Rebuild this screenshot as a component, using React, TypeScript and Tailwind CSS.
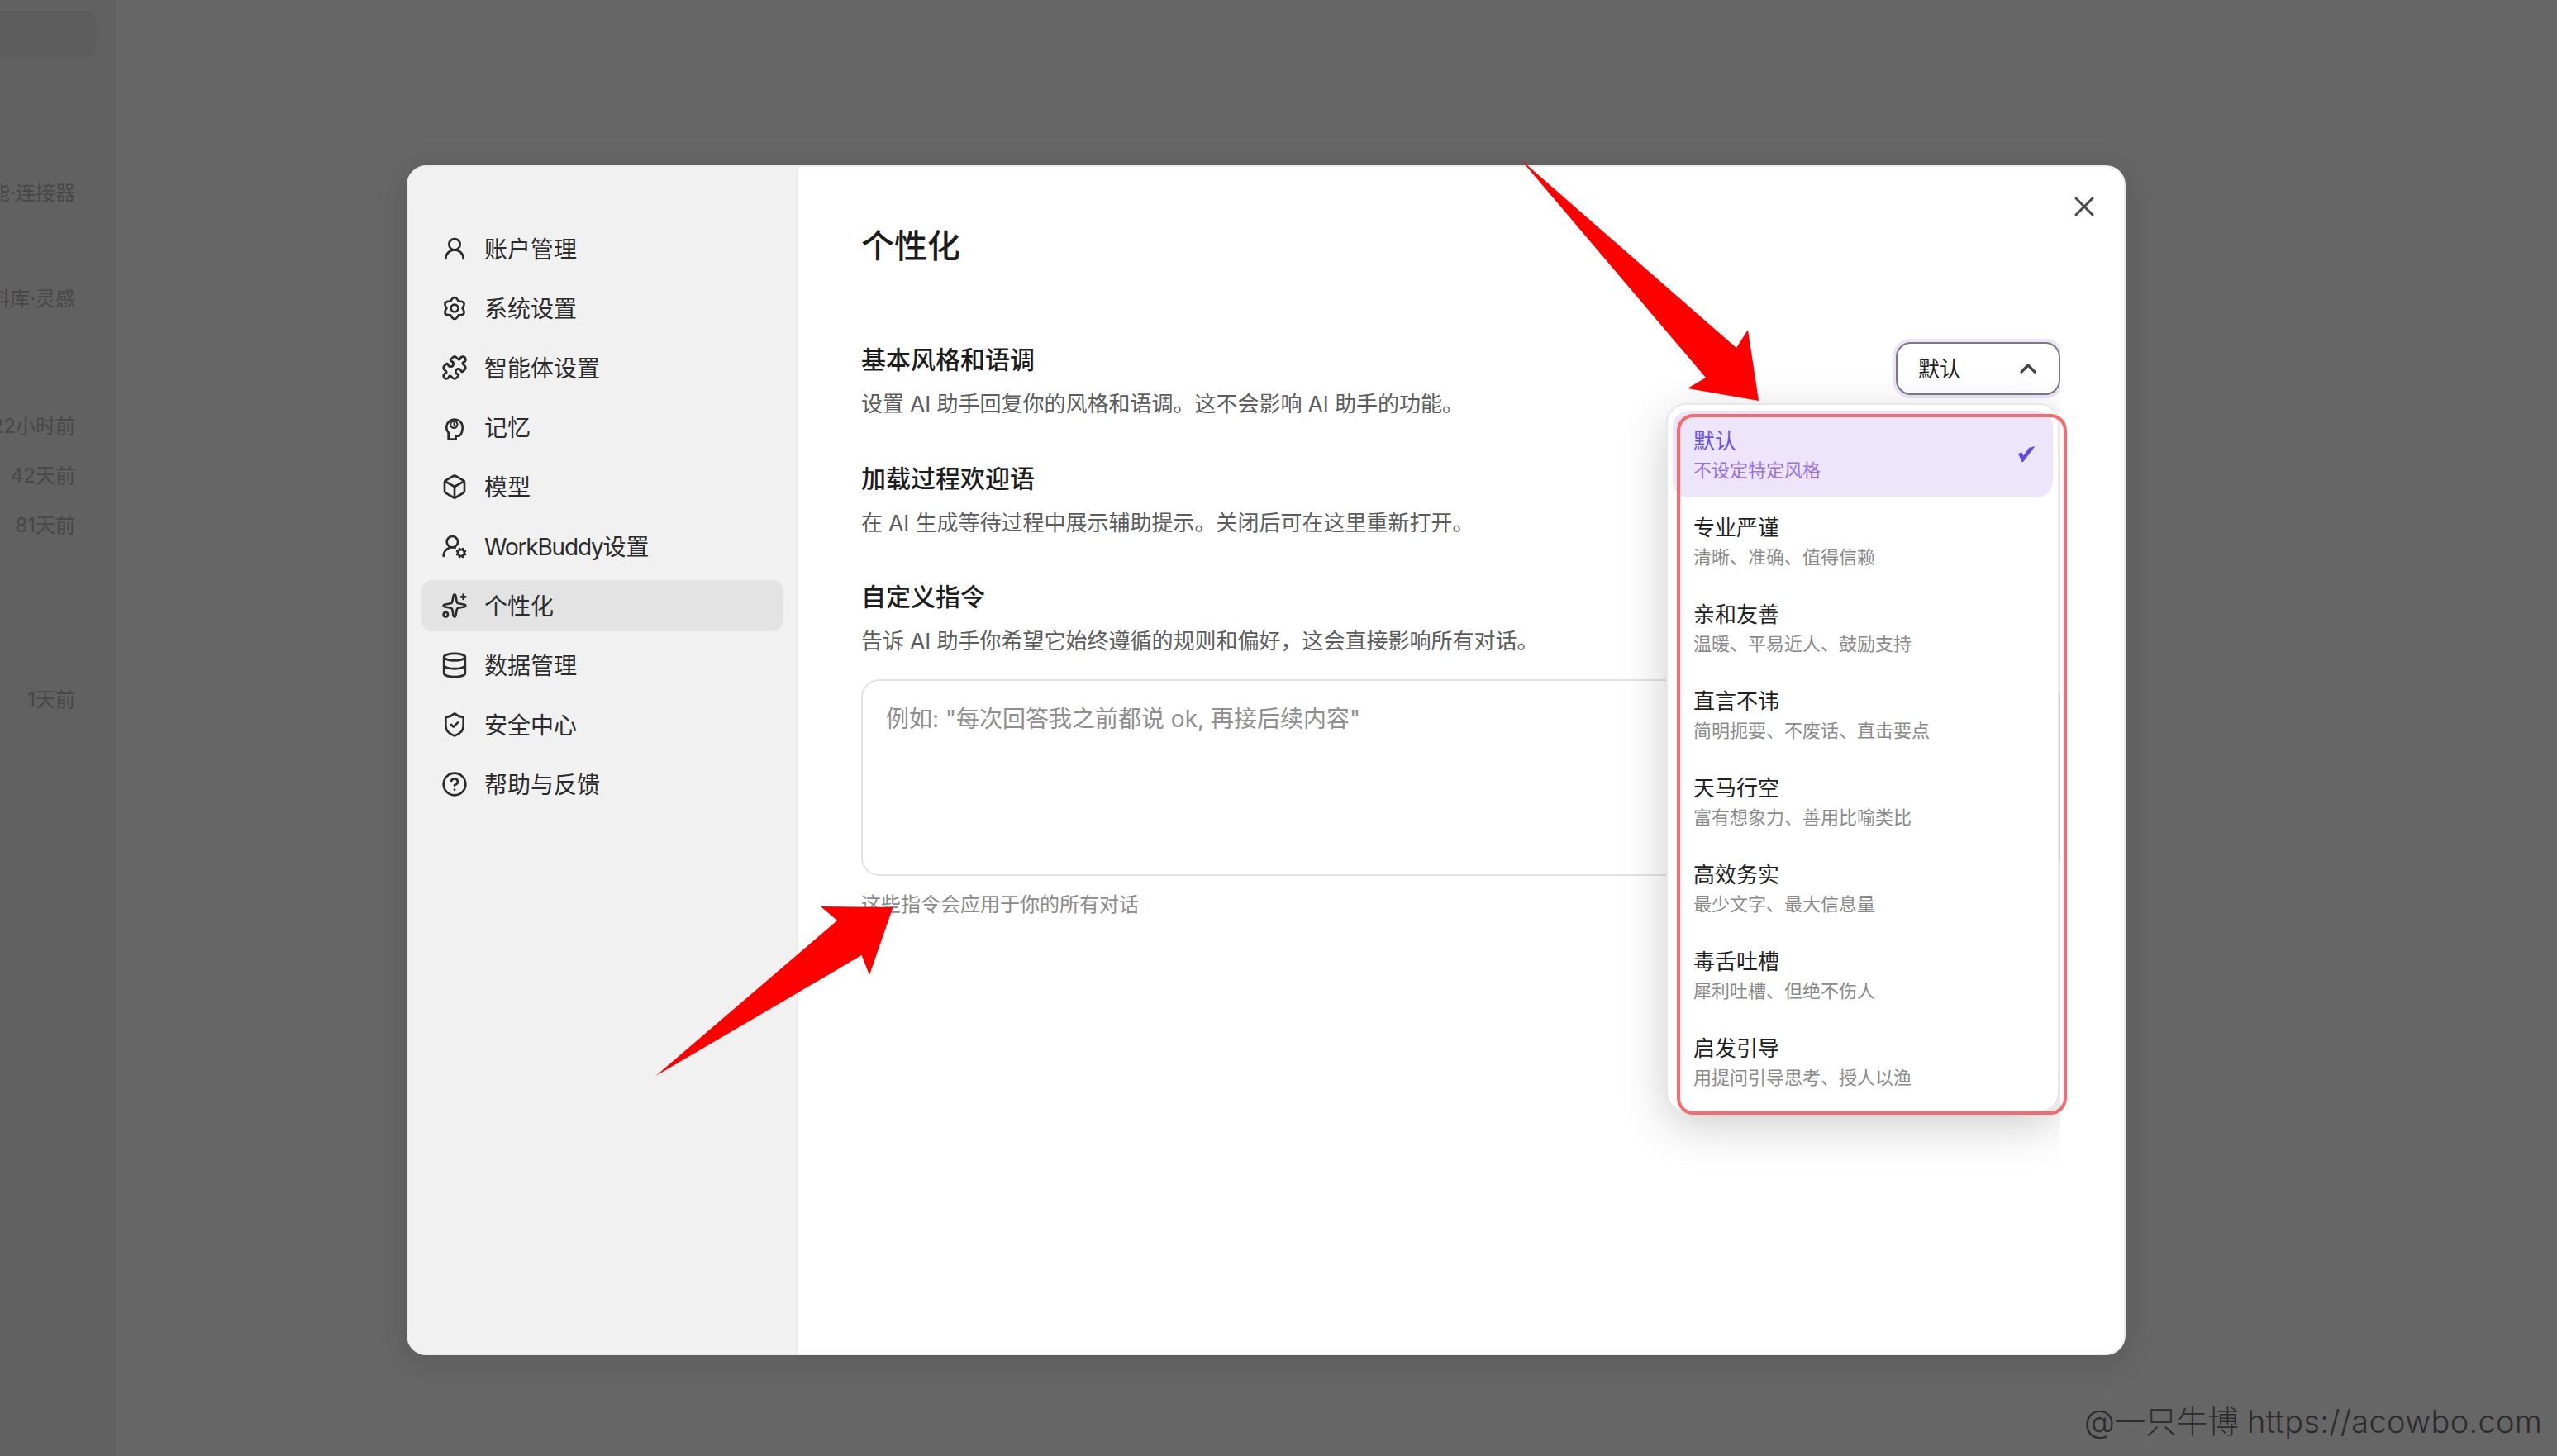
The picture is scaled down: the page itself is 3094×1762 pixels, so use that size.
import React from 'react';
import {
  Box,
  ChevronUp,
  CircleHelp,
  Database,
  Puzzle,
  ShieldCheck,
  Sparkles,
  UserRound,
  UserRoundCog,
  X,
} from 'lucide-react';

function MemoryIcon({ size = 32 }: { size?: number }) {
  return (
    <svg
      xmlns="http://www.w3.org/2000/svg"
      width={size}
      height={size}
      viewBox="0 0 24 24"
      fill="none"
      stroke="currentColor"
      strokeWidth="2"
      strokeLinecap="round"
      strokeLinejoin="round"
      className="overflow-visible"
    >
      <path d="M6.5 23v-6A7.3 7.3 0 1 1 19.3 12c0 3.5-1.3 8-3.8 8h-2.3v3z" />
      <circle cx="11.5" cy="9.6" r="3.1" strokeWidth="1.6" />
      <path d="M11.5 8.2v1.5l1.1.6" strokeWidth="1.3" />
    </svg>
  );
}

function GearIcon({ size = 32 }: { size?: number }) {
  return (
    <svg
      xmlns="http://www.w3.org/2000/svg"
      width={size}
      height={size}
      viewBox="0 0 24 24"
      fill="none"
      stroke="currentColor"
      strokeWidth="2"
      strokeLinecap="round"
      strokeLinejoin="round"
    >
      <path d="M8.4 5.76Q12 -1.2 15.6 5.76Q23.43 5.4 19.2 12Q23.43 18.6 15.6 18.24Q12 25.2 8.4 18.24Q0.57 18.6 4.8 12Q0.57 5.4 8.4 5.76z" />
      <circle cx="12" cy="12" r="3.3" />
    </svg>
  );
}

const navItems = [
  { label: '账户管理', icon: <UserRound size={32} /> },
  { label: '系统设置', icon: <GearIcon /> },
  { label: '智能体设置', icon: <Puzzle size={32} /> },
  { label: '记忆', icon: <MemoryIcon /> },
  { label: '模型', icon: <Box size={32} /> },
  { label: 'WorkBuddy', suffix: '设置', icon: <UserRoundCog size={32} /> },
  { label: '个性化', icon: <Sparkles size={32} />, active: true },
  { label: '数据管理', icon: <Database size={34} className="-mx-[1px]" /> },
  { label: '安全中心', icon: <ShieldCheck size={32} /> },
  { label: '帮助与反馈', icon: <CircleHelp size={32} /> },
];

const styles = [
  { title: '默认', sub: '不设定特定风格', active: true },
  { title: '专业严谨', sub: '清晰、准确、值得信赖' },
  { title: '亲和友善', sub: '温暖、平易近人、鼓励支持' },
  { title: '直言不讳', sub: '简明扼要、不废话、直击要点' },
  { title: '天马行空', sub: '富有想象力、善用比喻类比' },
  { title: '高效务实', sub: '最少文字、最大信息量' },
  { title: '毒舌吐槽', sub: '犀利吐槽、但绝不伤人' },
  { title: '启发引导', sub: '用提问引导思考、授人以渔' },
];

function BackgroundSidebar() {
  return (
    <aside className="h-full w-[140px] bg-[#616161] pt-[13px] text-[24px] leading-[32px] text-[#474747] whitespace-nowrap">
      <div className="h-[59px] w-[116px] rounded-r-[16px] bg-[#5d5d5d]" />
      <div className="mt-[146px] flex w-[91px] justify-end">技能·连接器</div>
      <div className="mt-[96px] flex w-[91px] justify-end">资料库·灵感</div>
      <div className="mt-[122px] flex w-[91px] justify-end">22小时前</div>
      <div className="mt-[28px] flex w-[91px] justify-end">42天前</div>
      <div className="mt-[28px] flex w-[91px] justify-end">81天前</div>
      <div className="mt-[179px] flex w-[91px] justify-end">1天前</div>
    </aside>
  );
}

function SectionText({ title, desc }: { title: string; desc: string }) {
  return (
    <div>
      <h3 className="text-[30px] leading-[40px] font-medium text-[#1c1c1c]">{title}</h3>
      <p className="mt-[16px] text-[26px] leading-[36px] text-[#5c5c5c]">{desc}</p>
    </div>
  );
}

function StyleMenu() {
  return (
    <div className="absolute right-[1px] top-[286px] h-[858px] w-[476px] rounded-[24px] border-2 border-[#e8e8e8] bg-white px-[6px] pt-[7px] shadow-[0_16px_56px_rgba(0,0,0,0.2)]">
      {styles.map((s) => (
        <div
          key={s.title}
          className={
            s.active
              ? 'flex h-[105px] items-center justify-between rounded-[20px] bg-[#ede6fb] pl-[25px] pr-[20px]'
              : 'flex h-[105px] items-center justify-between rounded-[20px] pl-[25px] pr-[20px]'
          }
        >
          <div className="pt-[3px]">
            <div className={s.active ? 'text-[26px] leading-[36px] text-[#6a4ff6]' : 'text-[26px] leading-[36px] text-[#1f1f1f]'}>
              {s.title}
            </div>
            <div className={s.active ? 'text-[22px] leading-[34px] text-[#9a70ea]' : 'text-[22px] leading-[34px] text-[#8a8a8a]'}>
              {s.sub}
            </div>
          </div>
          {s.active && (
            <svg width="24" height="24" viewBox="0 0 24 24" className="text-[#5d48f2]">
              <path fill="currentColor" d="M2 11l4.5-1.5 2 4L15 4l7.5-2L8 21H6.5z" />
            </svg>
          )}
        </div>
      ))}
    </div>
  );
}

export default function App() {
  return (
    <div className="relative h-[1762px] w-[3094px] overflow-hidden bg-[#666666] font-[family-name:'Inter','Noto_Sans_CJK_SC',sans-serif]">
      <BackgroundSidebar />

      {/* settings dialog */}
      <div className="absolute left-[492px] top-[200px] flex h-[1440px] w-[2080px] overflow-hidden rounded-[24px] border-2 border-[#ececec] bg-white shadow-[0_8px_40px_rgba(0,0,0,0.12)]">
        <nav className="flex w-[472px] shrink-0 flex-col gap-[10px] border-r-2 border-[#e8e8e8] bg-[#f1f1f1] px-[16px] pt-[68px]">
          {navItems.map((item) => (
            <div
              key={item.label}
              className={
                item.active
                  ? 'flex h-[62px] items-center gap-[20px] rounded-[14px] bg-[#e3e3e3] pl-[24px] text-[28px] text-[#2b2b2b]'
                  : 'flex h-[62px] items-center gap-[20px] rounded-[14px] pl-[24px] text-[28px] text-[#2b2b2b]'
              }
            >
              {item.icon}
              <span className="pt-[1px]">
                {item.suffix ? <span className="tracking-[-1.2px]">{item.label}</span> : item.label}
                {item.suffix}
              </span>
            </div>
          ))}
        </nav>

        <main className="relative min-w-0 flex-1 pl-[76px] pr-[77px]">
          <button className="absolute right-[28px] top-[28px] text-[#4a4a4a]">
            <X size={40} strokeWidth={1.8} />
          </button>

          <div className="relative h-full overflow-hidden pt-[72px]">
            <h2 className="text-[40px] leading-[48px] font-medium text-[#1c1c1c]">个性化</h2>

            <div className="mt-[93px] flex items-start justify-between">
              <SectionText title="基本风格和语调" desc="设置 AI 助手回复你的风格和语调。这不会影响 AI 助手的功能。" />
              <button className="-mt-[1px] flex h-[64px] w-[199px] items-center justify-between rounded-[18px] border-2 border-[#7a7a7a] bg-white pl-[25px] pr-[21px] text-[26px] text-[#1f1f1f] ring-4 ring-[#ebe4fb]">
                默认
                <ChevronUp size={32} strokeWidth={2.4} className="text-[#444444]" />
              </button>
            </div>

            <div className="mt-[52px]">
              <SectionText title="加载过程欢迎语" desc="在 AI 生成等待过程中展示辅助提示。关闭后可在这里重新打开。" />
            </div>

            <div className="mt-[51px]">
              <SectionText title="自定义指令" desc="告诉 AI 助手你希望它始终遵循的规则和偏好，这会直接影响所有对话。" />
            </div>

            <textarea
              readOnly
              placeholder={'例如: "每次回答我之前都说 ok, 再接后续内容"'}
              className="mt-[28px] block h-[238px] w-full resize-none rounded-[22px] border-2 border-[#e3e3e3] bg-white px-[28px] py-[28px] text-[28px] leading-[36px] outline-none placeholder:text-[#8f8f8f]"
            />
            <p className="mt-[19px] text-[24px] leading-[32px] text-[#8a8a8a]">这些指令会应用于你的所有对话</p>

            <StyleMenu />
          </div>
        </main>
      </div>

      {/* annotations drawn over the screenshot */}
      <div className="absolute left-[2029px] top-[501px] h-[848px] w-[472px] rounded-[20px] border-4 border-[#f96a6e]" />
      <svg className="absolute inset-0" width="3094" height="1762" viewBox="0 0 3094 1762">
        <polygon fill="#ff0000" points="1840,193 2101,421 2115,399 2128,485 2042,470 2064,457" />
        <polygon fill="#ff0000" points="793.5,1302 1013,1114 993,1097 1080.5,1098 1052,1180 1042.6,1156" />
      </svg>
      <div className="absolute left-[2522px] top-[1696px] text-[38px] leading-[48px] font-light whitespace-nowrap text-[#2c2c2c]">
        <span className="tracking-[-0.5px]">@一只牛博</span> <span className="tracking-[0.3px]">https://acowbo.com</span>
      </div>
    </div>
  );
}
